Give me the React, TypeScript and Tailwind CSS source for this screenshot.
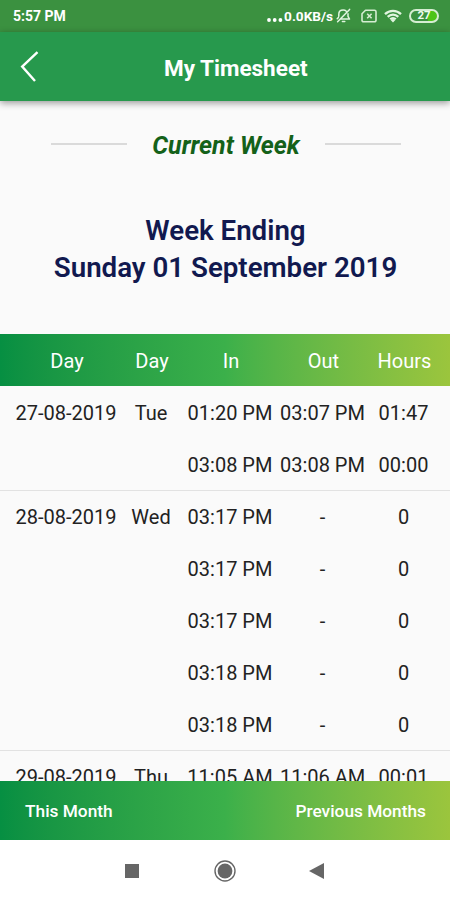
interface Entry {
  timeIn: string;
  timeOut: string;
  hours: string;
}

interface DayGroup {
  date: string;
  day: string;
  entries: Entry[];
}

const timesheet: DayGroup[] = [
  {
    date: '27-08-2019',
    day: 'Tue',
    entries: [
      { timeIn: '01:20 PM', timeOut: '03:07 PM', hours: '01:47' },
      { timeIn: '03:08 PM', timeOut: '03:08 PM', hours: '00:00' },
    ],
  },
  {
    date: '28-08-2019',
    day: 'Wed',
    entries: [
      { timeIn: '03:17 PM', timeOut: '-', hours: '0' },
      { timeIn: '03:17 PM', timeOut: '-', hours: '0' },
      { timeIn: '03:17 PM', timeOut: '-', hours: '0' },
      { timeIn: '03:18 PM', timeOut: '-', hours: '0' },
      { timeIn: '03:18 PM', timeOut: '-', hours: '0' },
    ],
  },
  {
    date: '29-08-2019',
    day: 'Thu',
    entries: [{ timeIn: '11:05 AM', timeOut: '11:06 AM', hours: '00:01' }],
  },
];

const columns = 'grid grid-cols-[112px_58px_100px_85px_77px] items-center text-center whitespace-nowrap';
const gradient = 'bg-linear-to-r from-[#068f42] via-[#3bb04a] to-[#9bc53d]';

function StatusBar() {
  return (
    <div className="flex h-8 shrink-0 items-center bg-[#3b9140] pr-[11px] pl-[13px] text-white">
      <span className="mt-px text-[14px] font-bold">5:57 PM</span>
      <div className="ml-auto flex items-center">
        <svg className="mt-2 h-1 w-4" viewBox="0 0 16 4" fill="currentColor">
          <circle cx="2" cy="2" r="1.9" />
          <circle cx="7.7" cy="2" r="1.9" />
          <circle cx="13.4" cy="2" r="1.9" />
        </svg>
        <span className="ml-px mt-px text-[13.6px] font-bold">0.0KB/s</span>
        <svg className="ml-[3px] h-[15px] w-[15px]" viewBox="0 0 15 15" fill="none" stroke="#e1f5df" strokeWidth="1.5" strokeLinecap="round" strokeLinejoin="round">
          <path d="M2.8 8.3V6.2c0-2.4 1.8-4.2 4.4-4.2 1.3 0 2.4.5 3.1 1.2M12 5.8v2.6l1.5 2.7H5M6.4 13.4h2.4M1.2 10.8l1.2-1.4M1.6 13.8L13.6 1.4" />
        </svg>
        <svg className="ml-[10px] h-[14px] w-4" viewBox="0 0 16 14" fill="none" stroke="#d5edd2" strokeWidth="1.6" strokeLinejoin="round">
          <path d="M4.5 1.2h9a1.5 1.5 0 0 1 1.5 1.5v8.6a1.5 1.5 0 0 1-1.5 1.5h-11A1.5 1.5 0 0 1 1 11.3V4.7z" />
          <path d="M6.2 4.8l4.4 4.4M10.6 4.8L6.2 9.2" />
        </svg>
        <svg className="ml-[7px] h-[14px] w-[18px]" viewBox="0 0 18 14" fill="none" stroke="#e1f5df" strokeWidth="2.3">
          <path d="M1 5.1C5.5.7 12.5.7 17 5.1M3.7 7.9c3-3 7.6-3 10.6 0M6.2 10.3c1.6-1.6 4-1.6 5.6 0" />
          <path d="M6.6 11L9 13.6l2.4-2.6c-1.4-1.2-3.4-1.2-4.8 0z" fill="#e1f5df" stroke="none" />
        </svg>
        <div className="ml-[7px] flex h-[14px] w-[30px] items-center justify-center rounded-full border-2 border-[#d5edd2] bg-linear-to-r from-[#3b9140] from-65% to-[#4cc417] to-65% text-[11.5px] leading-none font-bold text-[#eefbec]">
          27
        </div>
      </div>
    </div>
  );
}

function Header() {
  return (
    <header className="relative z-10 flex h-[69px] shrink-0 items-center bg-[#27994d] text-white shadow-[0_2px_7px_rgba(0,0,0,0.4)]">
      <svg className="ml-5 h-8 w-[19px]" viewBox="0 0 19 32" fill="none" stroke="currentColor" strokeWidth="2.4">
        <path d="M17.5 1.2L2.2 15.5L15 30" />
      </svg>
      <h1 className="mt-1 ml-[125px] text-[22.5px] font-bold">My Timesheet</h1>
    </header>
  );
}

function TableHead() {
  return (
    <div className={`${columns} ${gradient} h-[52px] shrink-0 pt-0.5 pr-[7px] pl-[11px] text-[20px] text-white`}>
      <span>Day</span>
      <span>Day</span>
      <span>In</span>
      <span>Out</span>
      <span>Hours</span>
    </div>
  );
}

function DayRows({ group }: { group: DayGroup }) {
  return (
    <div className="-mb-px shrink-0 border-b border-[#e2e2e2] text-[20px] text-[#222]">
      {group.entries.map((entry, i) => (
        <div key={i} className={`${columns} h-[52px] pt-0.5 pr-2 pl-[10px]`}>
          <span>{i === 0 ? group.date : ''}</span>
          <span>{i === 0 ? group.day : ''}</span>
          <span>{entry.timeIn}</span>
          <span>{entry.timeOut}</span>
          <span>{entry.hours}</span>
        </div>
      ))}
    </div>
  );
}

export default function App() {
  return (
    <div className="flex h-[900px] w-[450px] flex-col overflow-hidden bg-[#fafafa] font-['Roboto',sans-serif]">
      <StatusBar />
      <Header />
      <main className="flex min-h-0 flex-1 flex-col overflow-hidden">
        <div className="flex h-[86px] shrink-0 items-center justify-between pr-[49px] pl-[51px]">
          <div className="h-0.5 w-[76px] bg-[#dadada]" />
          <h2 className="mt-[3px] text-[24.9px] font-bold whitespace-nowrap text-[#146119] italic">Current Week</h2>
          <div className="h-0.5 w-[76px] bg-[#dadada]" />
        </div>
        <div className="h-[147px] shrink-0 pt-[25px] pl-px text-center text-[27.7px] leading-[37px] font-semibold whitespace-nowrap text-[#11194f]">
          <p>Week Ending</p>
          <p>Sunday 01 September 2019</p>
        </div>
        <TableHead />
        {timesheet.map((group) => (
          <DayRows key={group.date} group={group} />
        ))}
      </main>
      <footer className={`${gradient} flex h-[59px] shrink-0 items-center justify-between pt-0.5 pr-6 pl-[25px] text-[17.3px] font-medium text-white`}>
        <span>This Month</span>
        <span>Previous Months</span>
      </footer>
      <nav className="flex h-[60px] shrink-0 items-center bg-white pt-px text-[#666]">
        <div className="ml-[125px] h-[14px] w-[14px] bg-[#666]" />
        <svg className="ml-[75px] h-[22px] w-[22px]" viewBox="0 0 22 22">
          <circle cx="11" cy="11" r="10" fill="none" stroke="currentColor" strokeWidth="1.4" />
          <circle cx="11" cy="11" r="7.4" fill="currentColor" />
        </svg>
        <svg className="ml-[73px] h-4 w-[15px]" viewBox="0 0 15 16">
          <path d="M0 8L15 0V16Z" fill="currentColor" />
        </svg>
      </nav>
    </div>
  );
}
